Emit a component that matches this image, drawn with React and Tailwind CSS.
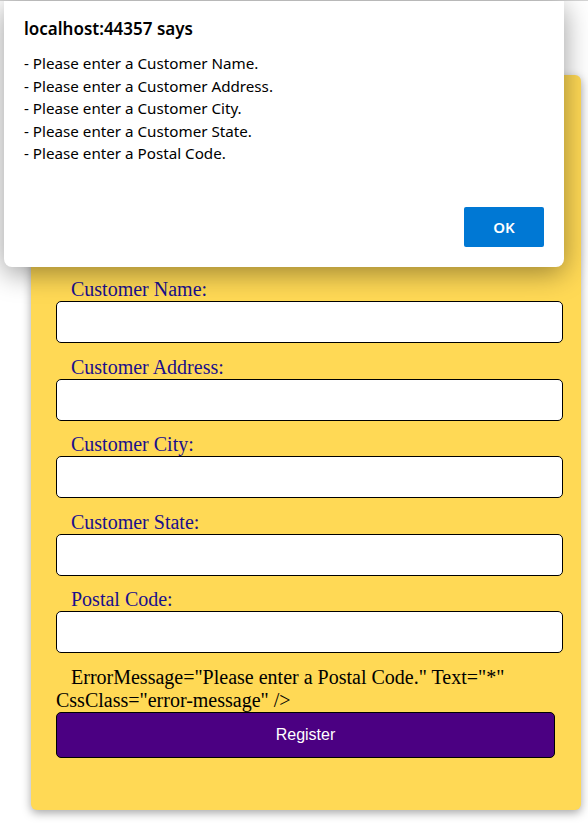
import React from 'react';

const fields = [
  'Customer Name:',
  'Customer Address:',
  'Customer City:',
  'Customer State:',
  'Postal Code:',
];

const messages = [
  '- Please enter a Customer Name.',
  '- Please enter a Customer Address.',
  '- Please enter a Customer City.',
  '- Please enter a Customer State.',
  '- Please enter a Postal Code.',
];

const App = () => {
  return (
    <div className="relative min-h-screen bg-white border-t border-[#d4d4d4] pt-[74px] pl-[31px]">
      {/* Registration card */}
      <div className="w-[550px] bg-[#ffd955] rounded-md shadow-[0_3px_10px_rgba(0,0,0,0.35)] pt-[203px] pl-[25px] pr-[18px] pb-[52px] font-['Liberation_Serif',serif] text-[20px]">
        {fields.map((label, i) => (
          <div key={label} className={i < fields.length - 1 ? 'mb-[12.5px]' : ''}>
            <div className="leading-[23px] pl-[15px] text-[#1a0f8c]">{label}</div>
            <input
              type="text"
              className="block w-full h-[42px] bg-white border border-black rounded-[5px] outline-none"
            />
          </div>
        ))}
        <p className="mt-[12.5px] leading-[23px] indent-[15px] text-black">
          ErrorMessage="Please enter a Postal Code." Text="*" CssClass="error-message" /&gt;
        </p>
        <button className="block w-[499px] h-[46px] bg-[#4b0082] border border-black rounded-[5px] text-white text-[16px] font-['Liberation_Sans',sans-serif]">
          Register
        </button>
      </div>

      {/* Browser alert dialog */}
      <div className="absolute top-0 left-[4px] w-[560px] h-[266px] bg-white rounded-b-lg shadow-[0_6px_28px_rgba(0,0,0,0.4)] flex flex-col px-[20px] pt-[15px] pb-[20px] font-['Noto_Sans',sans-serif] text-black">
        <h1 className="text-[17px] font-semibold leading-[26px]">localhost:44357 says</h1>
        <div className="mt-[10px] text-[15.2px] leading-[22.5px]">
          {messages.map((m) => (
            <div key={m}>{m}</div>
          ))}
        </div>
        <div className="mt-auto flex justify-end">
          <button className="w-[80px] h-[40px] bg-[#0078d4] rounded-[2px] text-white text-[15px] font-semibold">
            OK
          </button>
        </div>
      </div>
    </div>
  );
};

export default App;
